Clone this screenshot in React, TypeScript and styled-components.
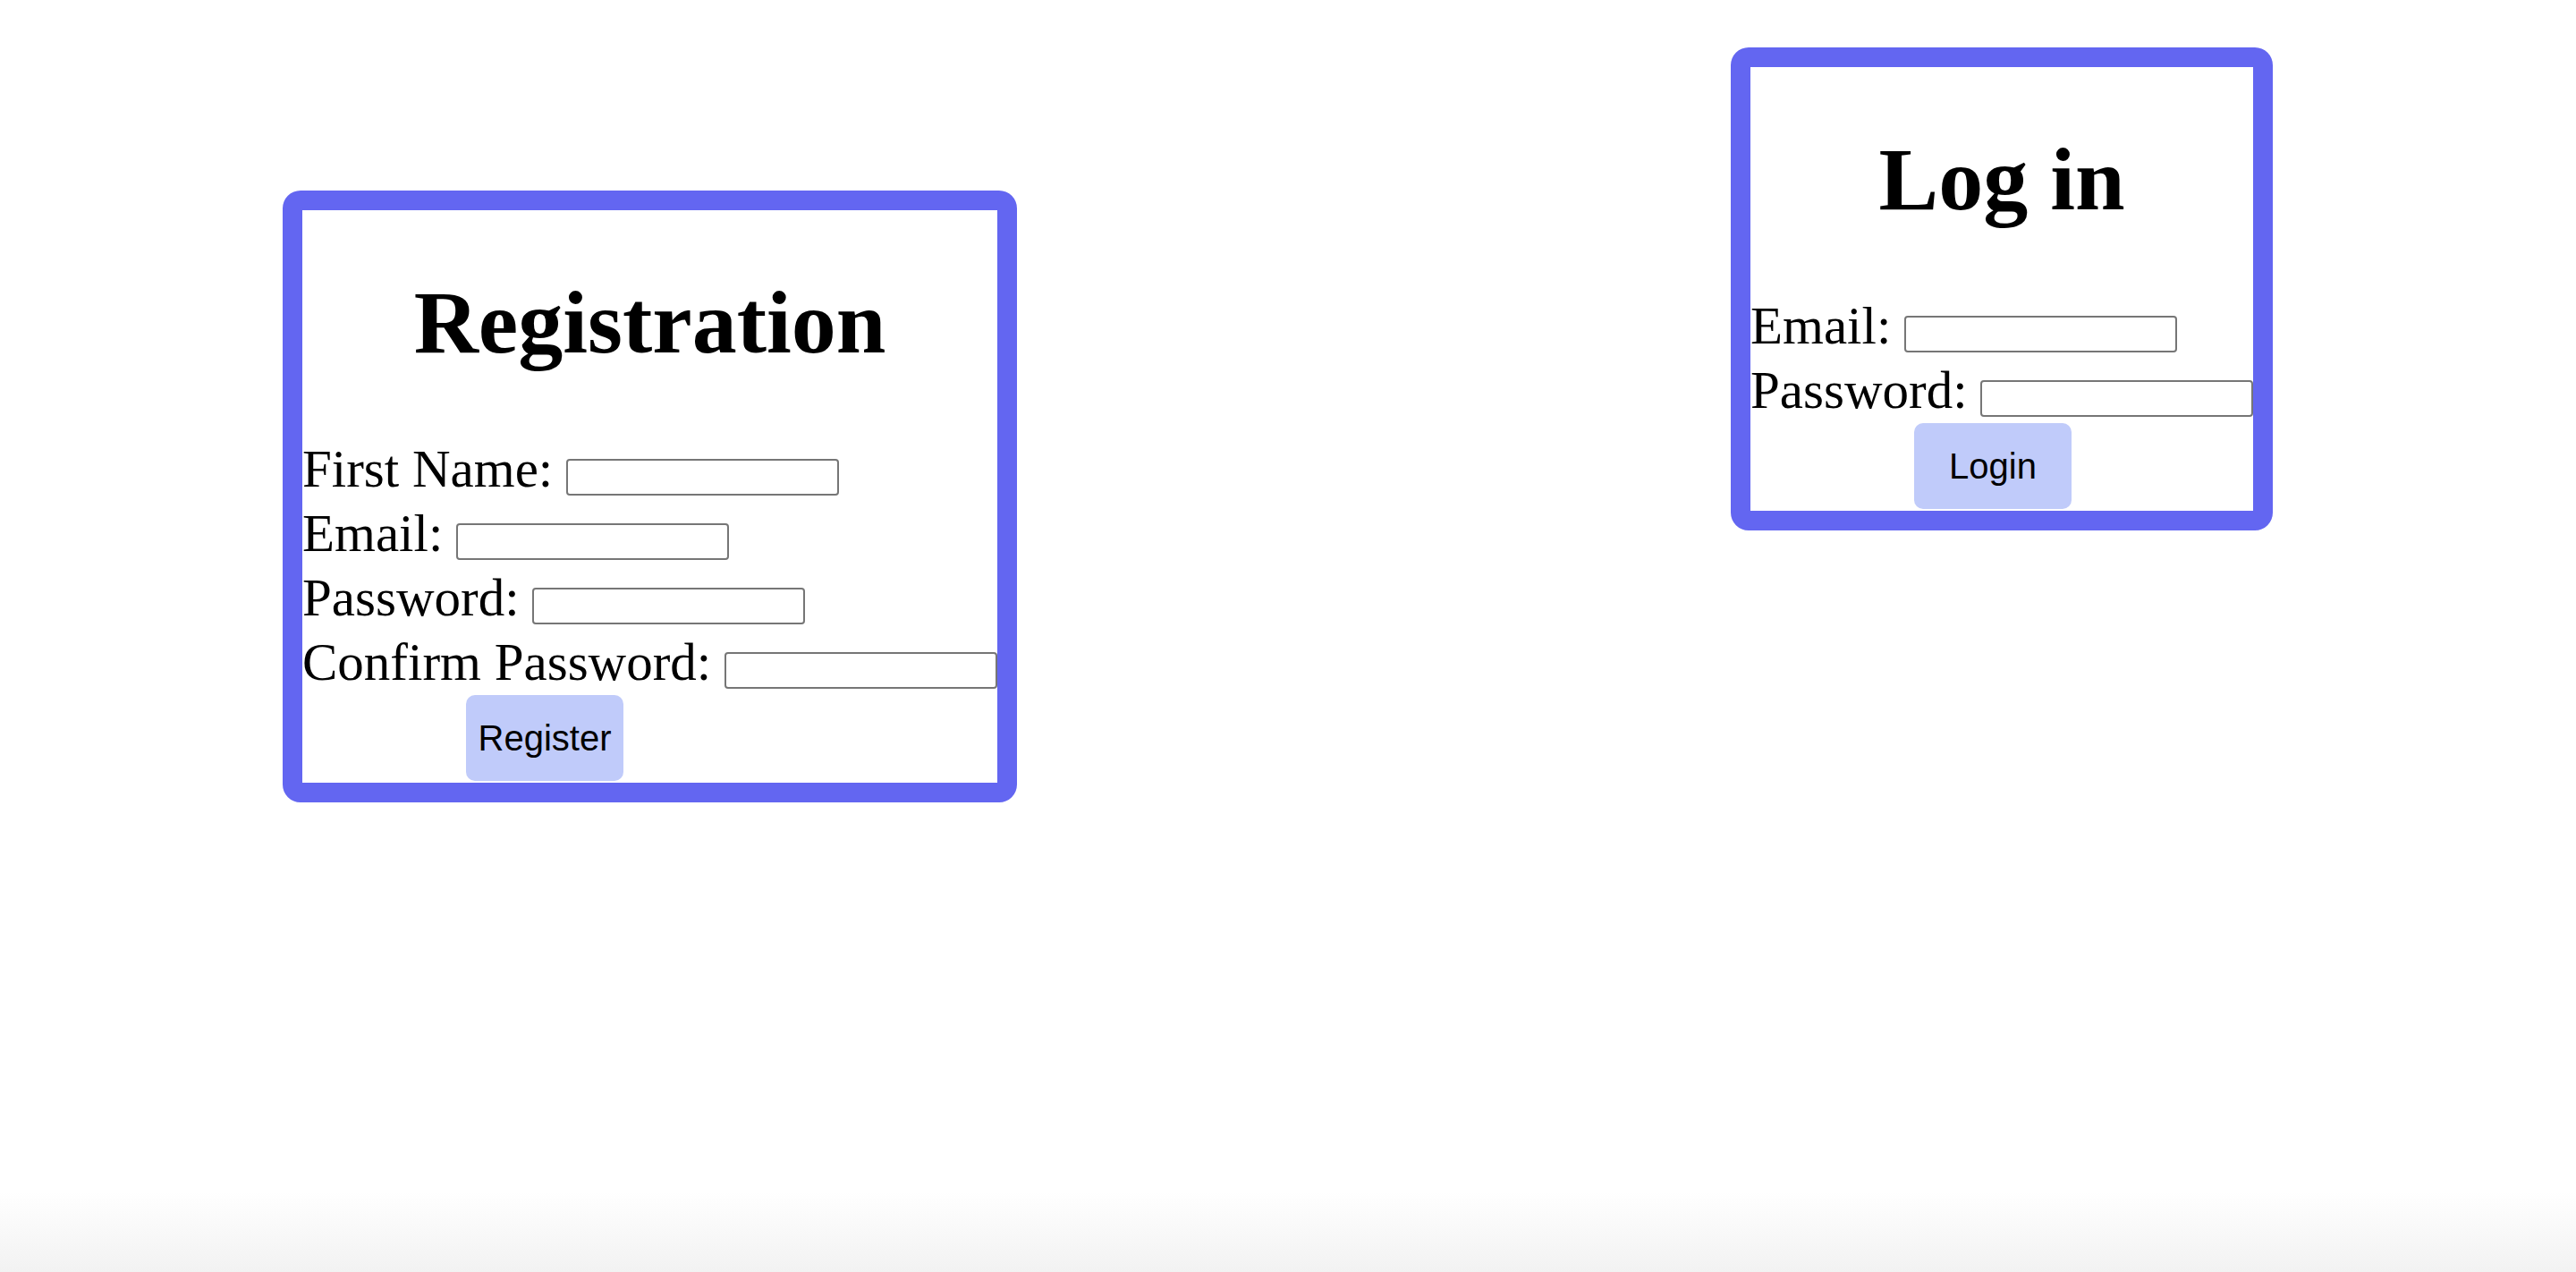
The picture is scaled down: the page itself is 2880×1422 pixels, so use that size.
import styled, { createGlobalStyle } from 'styled-components';

const GlobalStyle = createGlobalStyle`
  html,
  body {
    margin: 0;
    padding: 0;
  }
  body {
    min-height: 100vh;
    background: linear-gradient(to bottom, #ffffff calc(100% - 90px), #f2f2f2 100%);
    font-family: 'Liberation Serif', 'Times New Roman', serif;
    color: #000;
  }
`;

interface CardProps {
  $offsetTop: number;
}

interface Field {
  label: string;
  type: string;
}

const registerFields: Field[] = [
  { label: 'First Name:', type: 'text' },
  { label: 'Email:', type: 'email' },
  { label: 'Password:', type: 'password' },
  { label: 'Confirm Password:', type: 'password' },
];

const loginFields: Field[] = [
  { label: 'Email:', type: 'email' },
  { label: 'Password:', type: 'password' },
];

function AuthCard({ title, fields, action, offsetTop }: { title: string; fields: Field[]; action: string; offsetTop: number }) {
  return (
    <S.Card $offsetTop={offsetTop}>
      <S.Title>{title}</S.Title>
      {fields.map((field) => (
        <S.Row key={field.label}>
          <S.Label>{field.label}</S.Label> <S.Input type={field.type} />
        </S.Row>
      ))}
      <S.SubmitButton type="button">{action}</S.SubmitButton>
    </S.Card>
  );
}

export default function App() {
  return (
    <>
      <GlobalStyle />
      <S.Page>
        <AuthCard title="Registration" fields={registerFields} action="Register" offsetTop={160} />
        <AuthCard title="Log in" fields={loginFields} action="Login" offsetTop={0} />
      </S.Page>
    </>
  );
}

const S = {
  Page: styled.main`
    display: flex;
    align-items: flex-start;
    gap: 798px;
    padding: 53px 0 0 316px;
  `,
  Card: styled.section<CardProps>`
    flex: none;
    margin-top: ${(p) => p.$offsetTop}px;
    border: 22px solid #6366f1;
    border-radius: 20px;
    background-color: #fff;
  `,
  Title: styled.h1`
    margin: 66px 0 67px;
    font-size: 100px;
    line-height: 120px;
    font-weight: 700;
    text-align: center;
  `,
  Row: styled.div`
    font-size: 59px;
    line-height: 72px;
    white-space: nowrap;
  `,
  Label: styled.label`
    font-family: 'Liberation Serif', 'Times New Roman', serif;
  `,
  Input: styled.input`
    box-sizing: border-box;
    width: 305px;
    height: 41px;
    padding: 0 4px;
    border: 2px solid #767676;
    border-radius: 4px;
    background: #fff;
    font-family: 'Liberation Sans', Arial, sans-serif;
    font-size: 26.67px;
    vertical-align: 2px;
  `,
  SubmitButton: styled.button`
    display: block;
    width: 176px;
    height: 96px;
    margin: 1px 0 2px 183px;
    padding: 0;
    border: none;
    border-radius: 10px;
    background-color: #c0cbfa;
    color: #000;
    font-family: 'Liberation Sans', Arial, sans-serif;
    font-size: 40px;
    cursor: pointer;
  `,
};
